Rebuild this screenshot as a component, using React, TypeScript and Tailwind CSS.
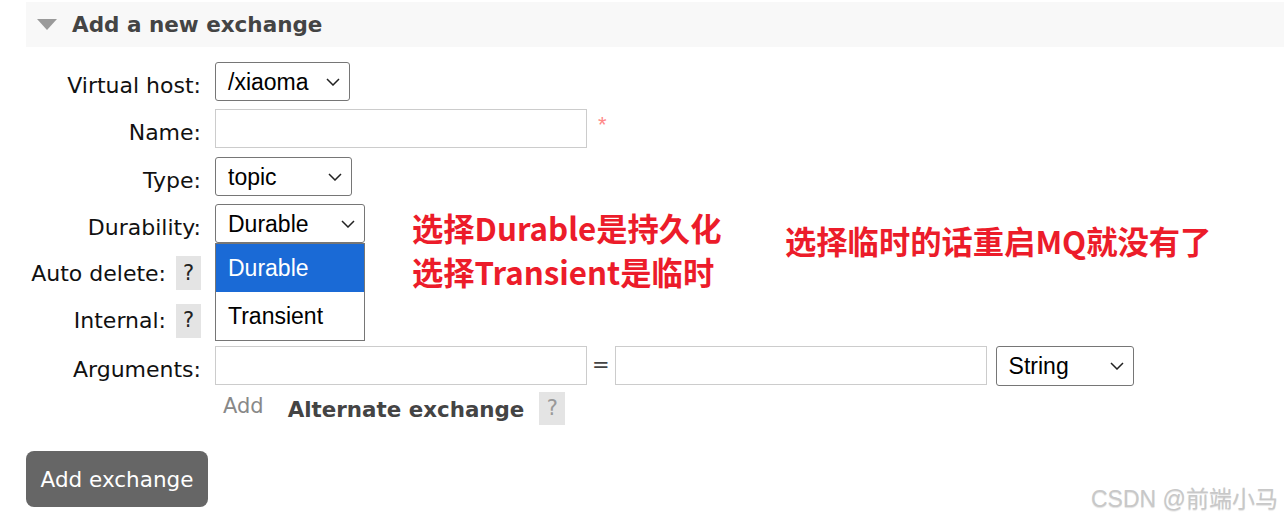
import React from "react";

const label = "font-['DejaVu_Sans',Verdana,sans-serif]";
const field = "font-['Liberation_Sans',Arial,sans-serif]";

export default function App() {
  return (
    <div className={`min-h-[521px] w-[1284px] bg-white ${label} text-[22px] text-[#111]`}>
      {/* section header */}
      <div className="ml-[26px] mt-[2px] flex h-[45px] items-center bg-[#f8f8f8] pl-[11px]">
        <svg width="20" height="11" viewBox="0 0 20 11" className="mr-[15px]">
          <polygon points="0,0 20,0 10,11" fill="#9a9a9a" />
        </svg>
        <h2 className="mt-[1px] text-[21.5px] font-bold text-[#444]">Add a new exchange</h2>
      </div>

      <div className="relative pl-[26px]">
        <div className="mt-[11px] grid grid-cols-[189px_1fr] auto-rows-[47.33px]">
          <Label text="Virtual host:" />
          <Row>
            <Select value="/xiaoma" className="w-[135px]" />
          </Row>

          <Label text="Name:" />
          <Row>
            <TextInput />
            <span className={`ml-[11px] -mt-[8px] text-[22px] text-[#f88] ${field}`}>*</span>
          </Row>

          <Label text="Type:" />
          <Row>
            <Select value="topic" className="w-[137px]" />
          </Row>

          <Label text="Durability:" />
          <Row>
            <div className="relative">
              <Select value="Durable" className="w-[150px]" />
              <div className={`absolute left-0 top-[39px] z-10 w-[150px] border border-[#767676] bg-white text-[23px] ${field}`}>
                <div className="flex h-[48px] items-center bg-[#1a6ad6] pl-[12px] text-white">Durable</div>
                <div className="flex h-[48px] items-center pl-[12px] text-black">Transient</div>
              </div>
            </div>
          </Row>

          <Label text="Auto delete:" help />
          <Row />

          <Label text="Internal:" help />
          <Row />

          <Label text="Arguments:" />
          <Row>
            <TextInput />
            <span className="mx-[5px] text-[21px] text-[#444]">=</span>
            <TextInput />
            <Select value="String" className="ml-[9px] w-[138px]" tall />
          </Row>
        </div>

        <div className="ml-[189px] mt-[3px] flex h-[33px] items-center">
          <span className="ml-[8px] -mt-[1px] self-start text-[21px] text-[#888]">Add</span>
          <span className="ml-[24px] mt-[3px] text-[21.4px] font-bold text-[#444]">Alternate exchange</span>
          <span className="ml-[15px] flex h-[33px] w-[26px] items-center justify-center bg-[#e4e4e4] text-[21px] text-[#999]">
            ?
          </span>
        </div>

        <button className="mt-[26px] h-[56px] w-[182px] rounded-[8px] bg-[#666] pt-[2px] text-[21.5px] text-white">
          Add exchange
        </button>
      </div>

      {/* annotations */}
      <div className="pointer-events-none absolute left-[412px] top-[206px] font-['Noto_Sans_CJK_SC',sans-serif] text-[31.3px] font-bold leading-[44px] text-[#ec1c2a]">
        <div>选择Durable是持久化</div>
        <div>选择Transient是临时</div>
      </div>
      <div className="pointer-events-none absolute left-[785px] top-[219px] font-['Noto_Sans_CJK_SC',sans-serif] text-[31.3px] font-bold leading-[44px] text-[#ec1c2a]">
        选择临时的话重启MQ就没有了
      </div>

      <div className="pointer-events-none absolute left-[1091px] top-[482px] font-['Liberation_Sans','Noto_Sans_CJK_SC',sans-serif] text-[23px] text-[#c8c8c8] [text-shadow:0_1px_1px_rgba(0,0,0,0.12)]">
        CSDN @前端小马
      </div>
    </div>
  );
}

function Label({ text, help }: { text: string; help?: boolean }) {
  return (
    <div className={`flex items-center justify-end pr-[14px] ${help ? "pt-[5px]" : "pt-[8px]"}`}>
      <span>{text}</span>
      {help && (
        <span className="ml-[10px] flex h-[34px] w-[25px] items-center justify-center bg-[#e4e4e4] text-[21px] text-[#222]">
          ?
        </span>
      )}
    </div>
  );
}

function Row({ children }: { children?: React.ReactNode }) {
  return <div className="flex items-center">{children}</div>;
}

function TextInput() {
  return <input className="h-[39px] w-[372px] border border-[#ccc] bg-white px-2 outline-none" />;
}

function Select({ value, className, tall }: { value: string; className?: string; tall?: boolean }) {
  return (
    <div
      className={`flex ${tall ? "h-[40px]" : "h-[39px]"} items-center justify-between rounded-[3px] border border-[#767676] bg-white pl-[12px] pr-[9px] pt-[1px] text-[23px] text-black ${field} ${className ?? ""}`}
    >
      <span>{value}</span>
      <svg width="14" height="8" viewBox="0 0 14 8">
        <path d="M1 1l6 6 6-6" fill="none" stroke="#222" strokeWidth="1.5" />
      </svg>
    </div>
  );
}
